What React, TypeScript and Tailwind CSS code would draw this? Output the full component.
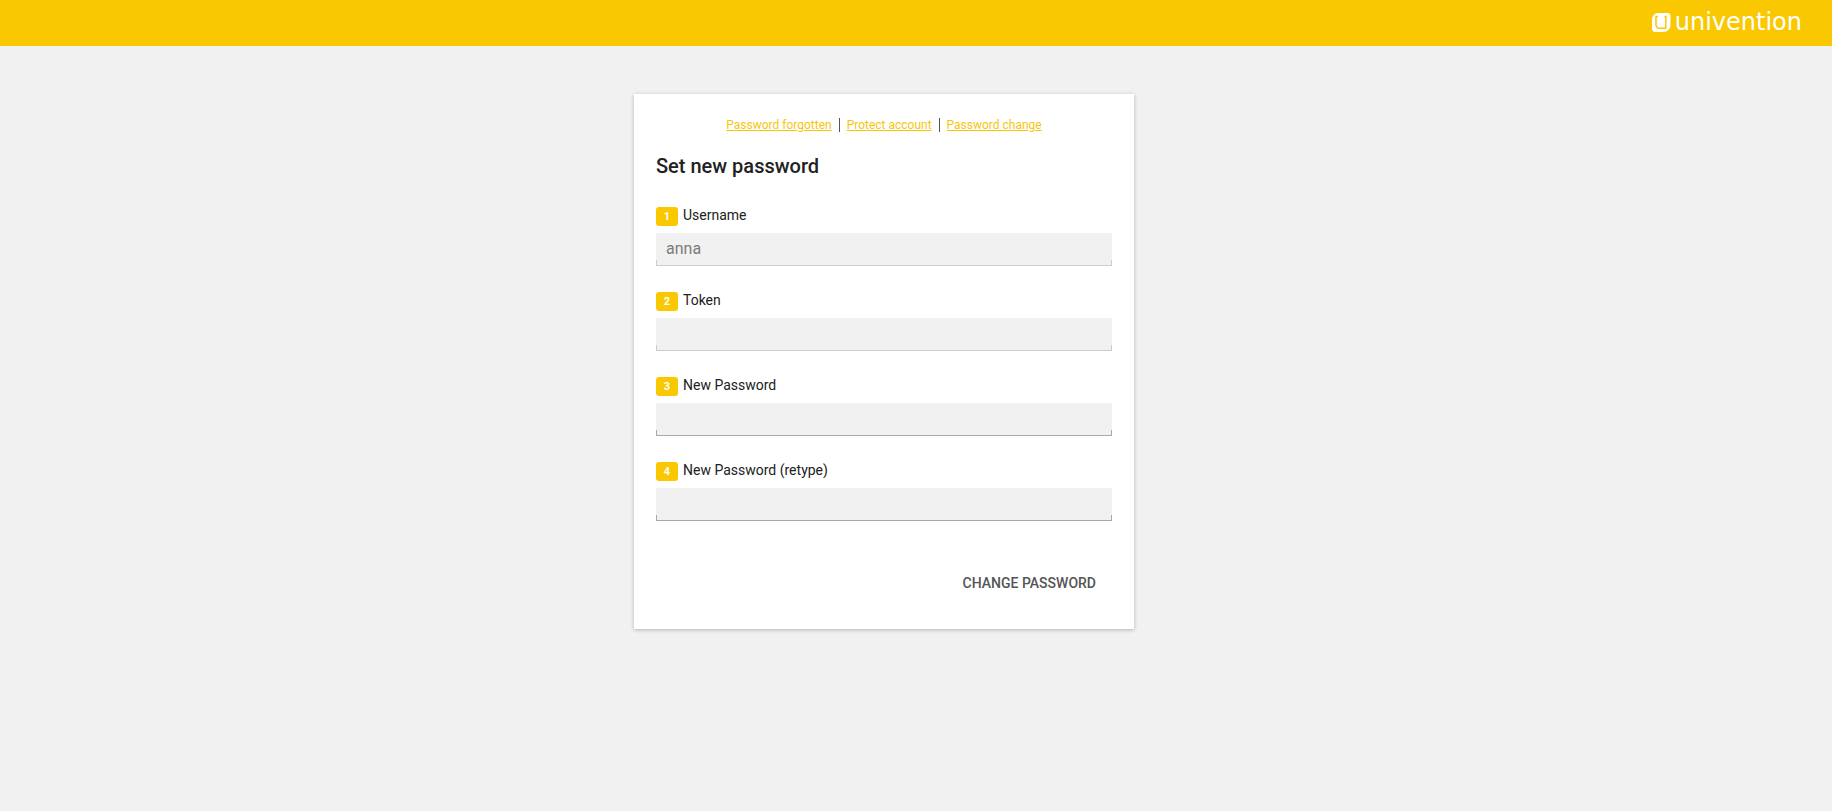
import { useState } from 'react';

const links = [
    { label: 'Password forgotten', href: '#passwordforgotten' },
    { label: 'Protect account', href: '#setcontactinformation' },
    { label: 'Password change', href: '#passwordchange' },
];

type StepProps = {
    step: number;
    id: string;
    label: string;
    type?: string;
    value: string;
    disabled?: boolean;
    onChange?: (value: string) => void;
};

function Step({ step, id, label, type = 'text', value, disabled = false, onChange }: StepProps) {
    const lineStyle = disabled
        ? "border-[#cccccc] before:bg-[#cccccc] after:bg-[#cccccc]"
        : "border-[#a9a9a9] before:bg-[#a9a9a9] after:bg-[#a9a9a9]";

    return (
        <div>
            <div className="flex items-start gap-[5px] h-[26px]">
                <span className="w-[22px] h-[19px] rounded-[3px] bg-[#fac800] text-white text-[11px] leading-[19px] font-bold text-center">
                    {step}
                </span>
                <label htmlFor={id} className="text-sm leading-4">{label}</label>
            </div>

            {/* underline with a short tick at each end */}
            <div className={"relative border-b before:absolute before:left-0 before:bottom-0 before:w-px before:h-[5px] after:absolute after:right-0 after:bottom-0 after:w-px after:h-[5px] " + lineStyle}>
                <input
                    id={id}
                    type={type}
                    value={value}
                    disabled={disabled}
                    onChange={(e) => onChange?.(e.target.value)}
                    className="block w-full h-8 px-2.5 pb-0.5 bg-[#f1f1f1] text-base text-gray-900 outline-none disabled:text-[#7b7b7b]"
                />
            </div>
        </div>
    );
}

function Logo() {
    return (
        <a href="#" className="flex items-center gap-1 text-white">
            <svg width="19" height="19" viewBox="0 0 19 19" aria-hidden="true">
                <path d="M5 0H15.5Q18.5 0 18.5 3V12.5Q18.5 15 16.5 16.8Q14.5 19 12 19H3.5Q0 19 0 15.5V6Q0 4 1.5 2.5Q3 0 5 0Z" fill="currentColor" />
                <path d="M6 3.6H4V11.5Q4 15.2 7.7 15.2H13.8V3.6H12.4" fill="none" stroke="#fac800" strokeWidth="1.5" />
            </svg>
            <span className="font-['DejaVu_Sans',sans-serif] text-2xl leading-6">univention</span>
        </a>
    );
}

export default function App() {
    const [password, setPassword] = useState('');
    const [retype, setRetype] = useState('');

    return (
        <div className="min-h-screen bg-[#f1f1f1] font-[Roboto,sans-serif] text-[#212121]">
            <header className="h-[46px] bg-[#fac800] flex items-center justify-end pr-[30px] pb-0.5">
                <Logo />
            </header>

            <main className="flex justify-center pt-12 pb-12 pr-16">
                <div className="w-full max-w-[500px] bg-white px-[22px] pt-6 pb-7 shadow-[0_1px_4px_rgba(0,0,0,0.25)]">
                    <nav className="flex justify-center h-[14px] divide-x divide-[#555555]">
                        {links.map((link) => (
                            <div key={link.href} className="px-[7px] flex items-center">
                                <a href={link.href} className="text-xs leading-[14px] text-[#f5c60c] underline">{link.label}</a>
                            </div>
                        ))}
                    </nav>

                    <h1 className="mt-5 text-xl leading-7 font-medium">Set new password</h1>

                    <form className="mt-[27px]" onSubmit={(e) => e.preventDefault()}>
                        <div className="flex flex-col gap-[26px]">
                            <Step step={1} id="username" label="Username" value="anna" disabled />
                            <Step step={2} id="token" label="Token" value="" disabled />
                            <Step step={3} id="new-password" label="New Password" type="password" value={password} onChange={setPassword} />
                            <Step step={4} id="new-password-retype" label="New Password (retype)" type="password" value={retype} onChange={setRetype} />
                        </div>

                        <div className="flex justify-end mt-11">
                            <button type="submit" className="h-9 px-4 text-sm font-medium uppercase text-[#555555]">
                                Change password
                            </button>
                        </div>
                    </form>
                </div>
            </main>
        </div>
    );
}
